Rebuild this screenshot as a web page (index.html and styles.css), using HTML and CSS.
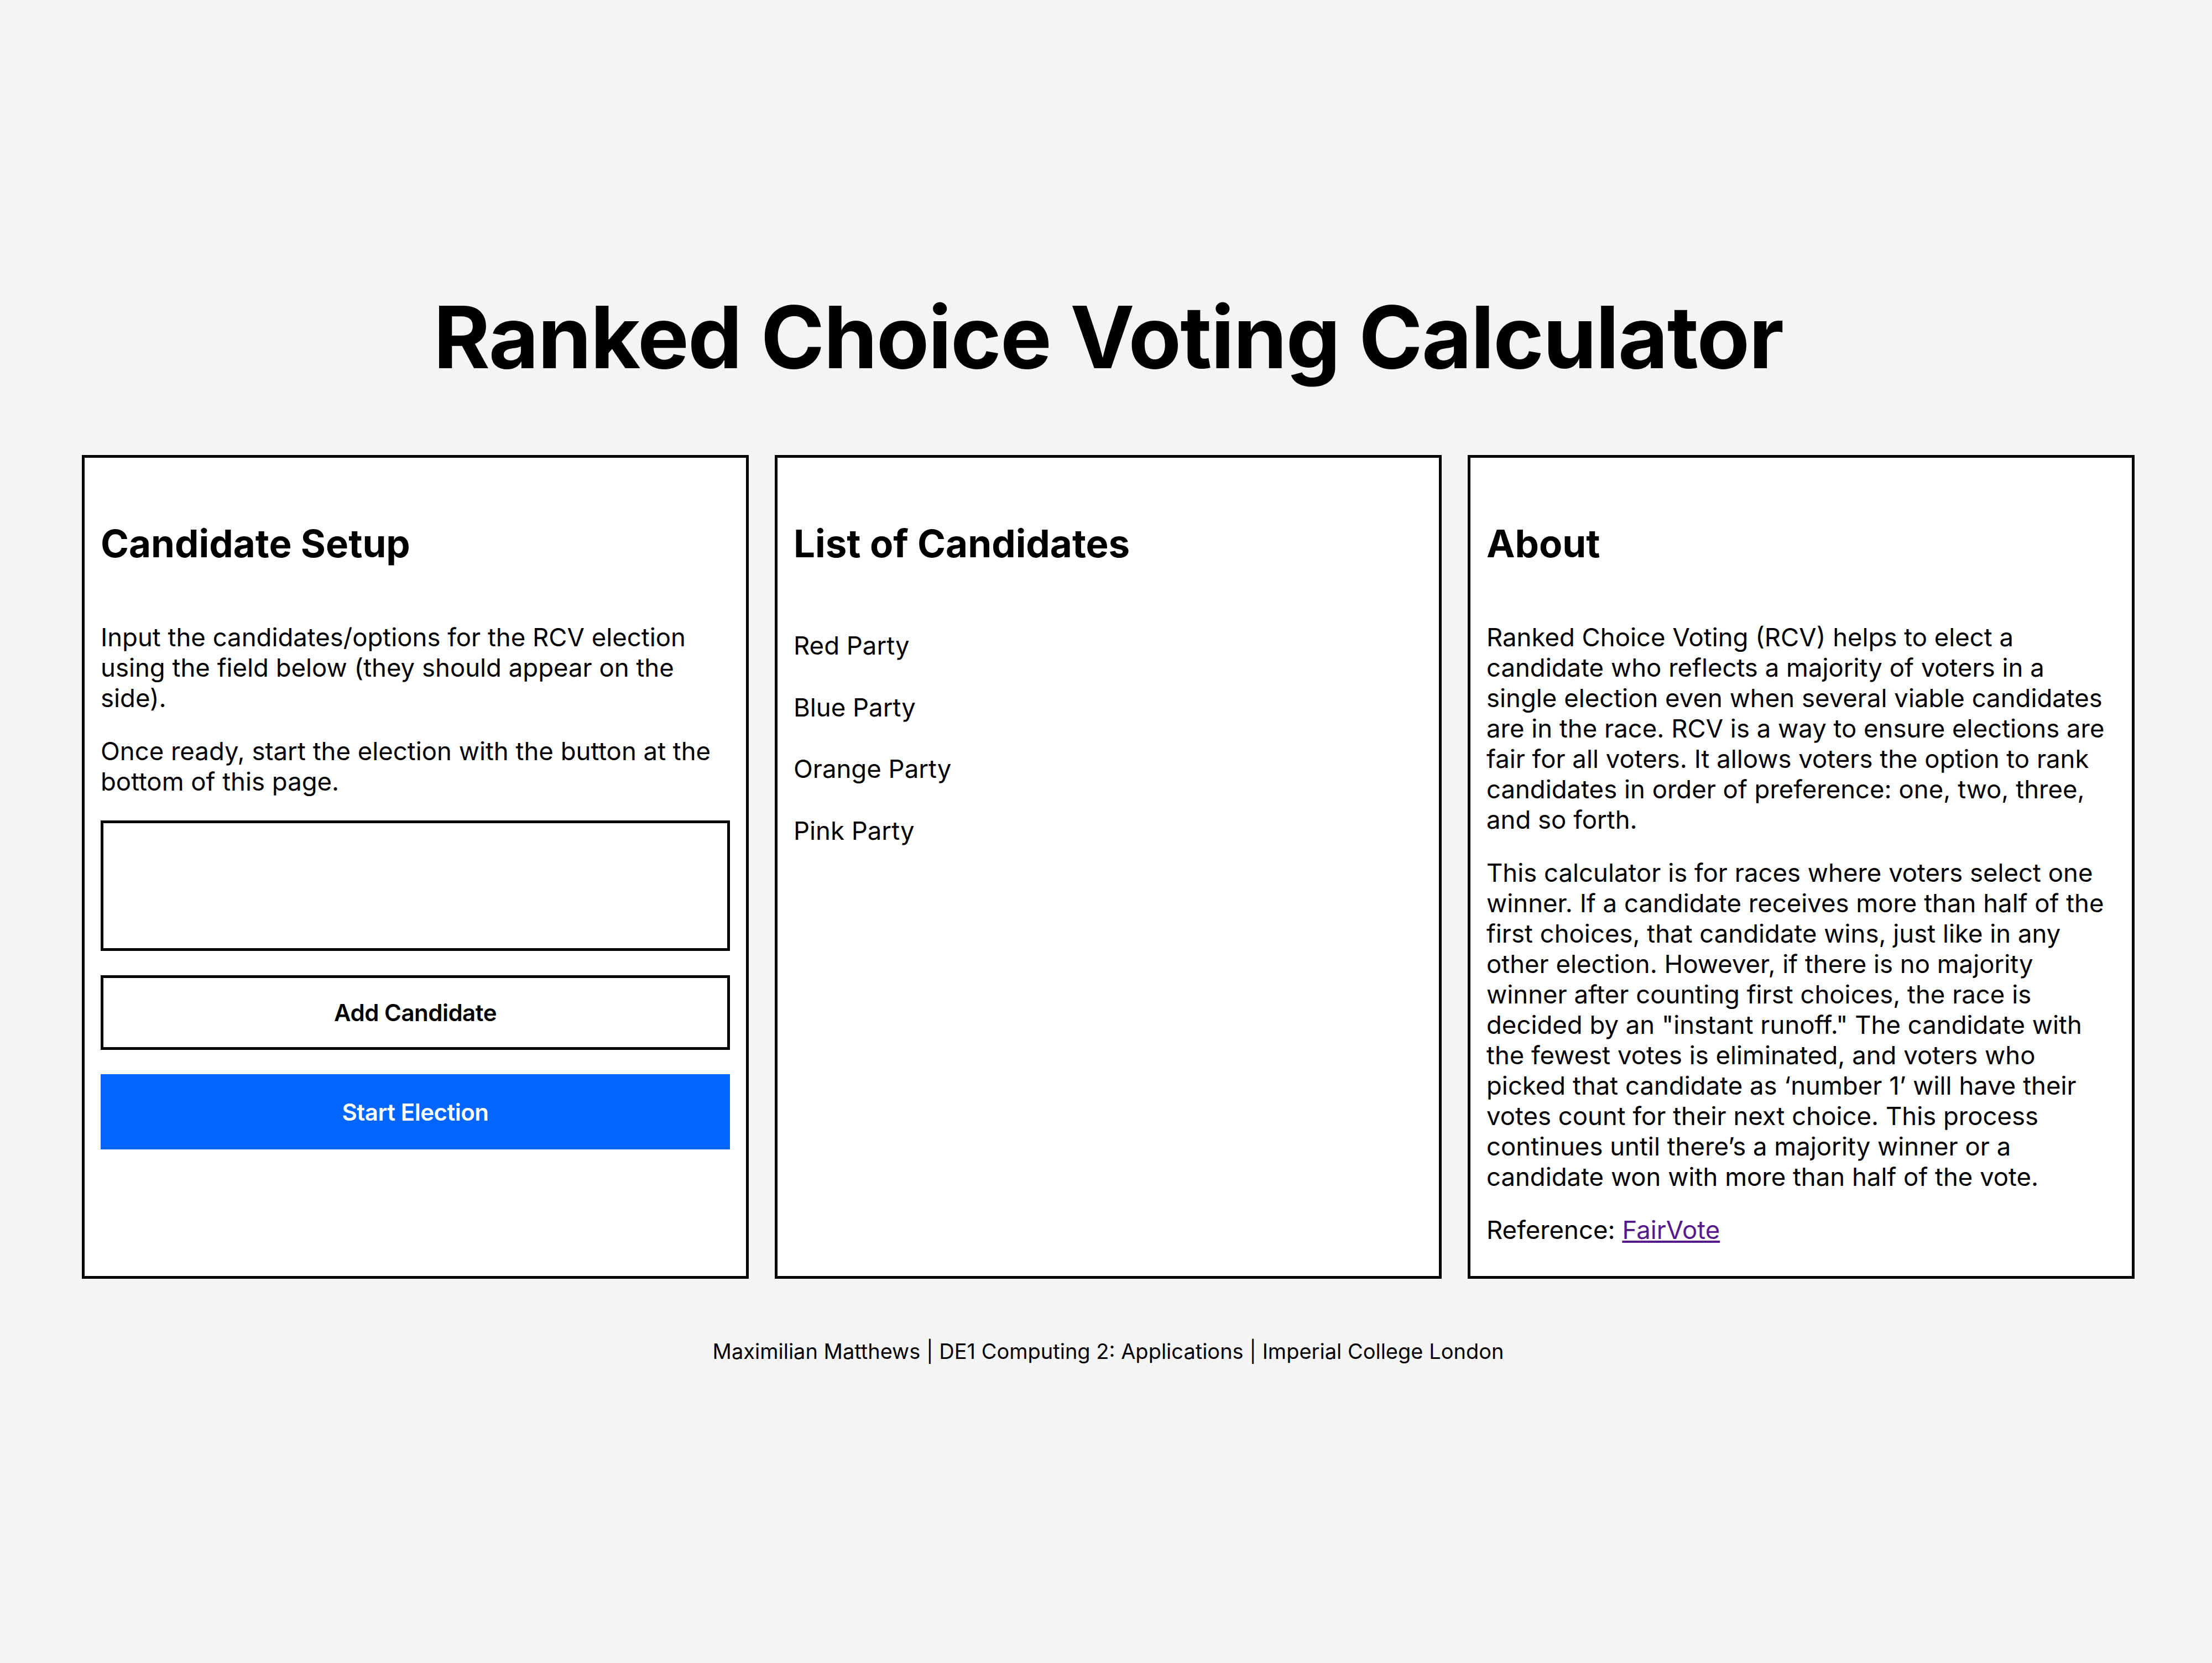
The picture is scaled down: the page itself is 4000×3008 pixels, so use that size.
FILE: index.html
```html
<!DOCTYPE html>
<html lang="en">
<head>
<meta charset="utf-8">
<title>Ranked Choice Voting Calculator</title>
<link rel="stylesheet" href="styles.css">
</head>
<body>
<div class="page">
  <header class="page-header">
    <h1 class="title">Ranked Choice Voting Calculator</h1>
  </header>
  <main class="panels">
    <section class="panel">
      <h2 class="panel-title">Candidate Setup</h2>
      <p class="text">Input the candidates/options for the RCV election using the field below (they should appear on the side).</p>
      <p class="text">Once ready, start the election with the button at the bottom of this page.</p>
      <input class="field" type="text" aria-label="Candidate name">
      <button class="btn btn-outline" type="button">Add Candidate</button>
      <button class="btn btn-primary" type="button">Start Election</button>
    </section>
    <section class="panel">
      <h2 class="panel-title">List of Candidates</h2>
      <ul class="candidates">
        <li class="candidate">Red Party</li>
        <li class="candidate">Blue Party</li>
        <li class="candidate">Orange Party</li>
        <li class="candidate">Pink Party</li>
      </ul>
    </section>
    <section class="panel">
      <h2 class="panel-title">About</h2>
      <p class="text">Ranked Choice Voting (RCV) helps to elect a candidate who reflects a majority of voters in a single election even when several viable candidates are in the race. RCV is a way to ensure elections are fair for all voters. It allows voters the option to rank candidates in order of preference: one, two, three, and so forth.</p>
      <p class="text">This calculator is for races where voters select one winner. If a candidate receives more than half of the first choices, that candidate wins, just like in any other election. However, if there is no majority winner after counting first choices, the race is decided by an "instant runoff." The candidate with the fewest votes is eliminated, and voters who picked that candidate as ‘number 1’ will have their votes count for their next choice. This process continues until there’s a majority winner or a candidate won with more than half of the vote.</p>
      <p class="text">Reference: <a class="link" href="#">FairVote</a></p>
    </section>
  </main>
  <footer class="footer">Maximilian Matthews | DE1 Computing 2: Applications | Imperial College London</footer>
</div>
</body>
</html>
```

FILE: styles.css
```css
* { box-sizing: border-box; }

html, body {
  margin: 0;
  padding: 0;
  background: #f4f4f4;
  color: #000;
  font-family: "Inter", "Liberation Sans", sans-serif;
}

body { min-height: 3008px; }

.page {
  width: 3712px;
  margin-left: 148px;
}

.page-header {
  padding-top: 515px;
  text-align: center;
}

.title {
  margin: 0;
  font-size: 156px;
  font-weight: 700;
  line-height: 189px;
  letter-spacing: -1.8px;
}

.panels {
  display: grid;
  grid-template-columns: repeat(3, 1206px);
  column-gap: 47px;
  margin-top: 119px;
  align-items: stretch;
}

.panel {
  background: #fff;
  border: 5px solid #000;
  padding: 113px 29px 56px;
  display: flex;
  flex-direction: column;
}

.panel-title {
  margin: 0 0 100px;
  font-size: 69px;
  font-weight: 700;
  line-height: 84px;
}

.text {
  margin: 0 0 41px;
  font-size: 45.5px;
  line-height: 55px;
}

.text:last-child { margin-bottom: 0; }

.field {
  display: block;
  width: 100%;
  height: 236px;
  margin: 2px 0 44px;
  border: 5px solid #000;
  background: #fff;
  font: inherit;
  font-size: 45px;
  padding: 0 20px;
}

.btn {
  display: block;
  width: 100%;
  height: 135px;
  font-family: inherit;
  font-size: 42px;
  font-weight: 600;
  letter-spacing: -0.5px;
  cursor: pointer;
}

.btn-outline {
  background: #fff;
  color: #000;
  border: 5px solid #000;
  margin-bottom: 44px;
}

.btn-primary {
  background: #0066ff;
  color: #fff;
  border: none;
  height: 136px;
}

.candidates {
  list-style: none;
  margin: 15px 0 0;
  padding: 0;
  display: flex;
  flex-direction: column;
  gap: 56.5px;
}

.candidate {
  font-size: 45.5px;
  line-height: 55px;
}

.link { color: #551a8b; }

.footer {
  margin-top: 108px;
  text-align: center;
  font-size: 38px;
  line-height: 46px;
}
```
